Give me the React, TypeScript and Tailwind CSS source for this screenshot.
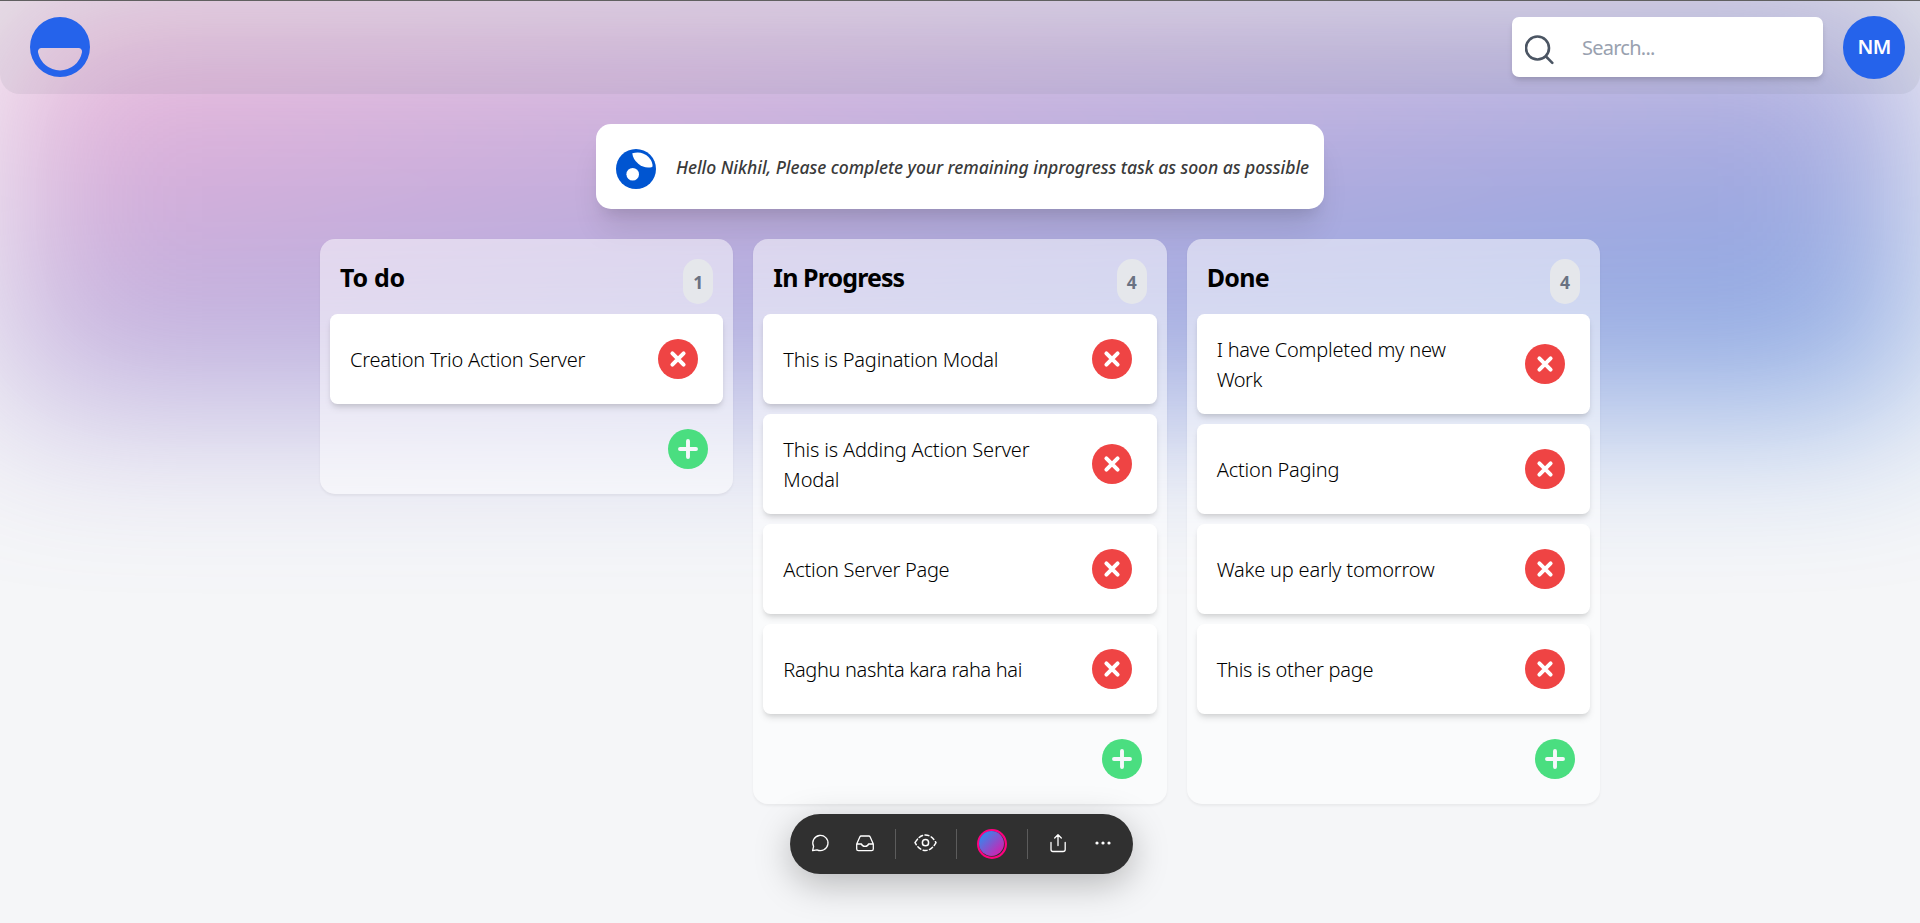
import React from "react";

type Line = { text: string; tracking: string };
type Col = { id: string; title: string; titleClass: string; tasks: Line[][] };

const columns: Col[] = [
  {
    id: "todo",
    title: "To do",
    titleClass: "tracking-[-0.25px]",
    tasks: [[{ text: "Creation Trio Action Server", tracking: "tracking-[-0.23px]" }]],
  },
  {
    id: "inprogress",
    title: "In Progress",
    titleClass: "tracking-[-0.9px]",
    tasks: [
      [{ text: "This is Pagination Modal", tracking: "tracking-[-0.2px]" }],
      [
        { text: "This is Adding Action Server", tracking: "tracking-[-0.18px]" },
        { text: "Modal", tracking: "tracking-[-0.1px]" },
      ],
      [{ text: "Action Server Page", tracking: "tracking-[-0.27px]" }],
      [{ text: "Raghu nashta kara raha hai", tracking: "tracking-[-0.35px]" }],
    ],
  },
  {
    id: "done",
    title: "Done",
    titleClass: "tracking-[-0.7px]",
    tasks: [
      [
        { text: "I have Completed my new", tracking: "tracking-[-0.22px]" },
        { text: "Work", tracking: "tracking-[-0.5px]" },
      ],
      [{ text: "Action Paging", tracking: "tracking-[-0.19px]" }],
      [{ text: "Wake up early tomorrow", tracking: "tracking-[-0.2px]" }],
      [{ text: "This is other page", tracking: "tracking-[-0.27px]" }],
    ],
  },
];

function RemoveIcon() {
  return (
    <svg width="40" height="40" viewBox="0 0 40 40">
      <circle cx="20" cy="20" r="20" fill="#ef4444" />
      <path d="M14.4 14.4L25.6 25.6M25.6 14.4L14.4 25.6" stroke="#fff" strokeWidth="4" strokeLinecap="round" />
    </svg>
  );
}

function AddIcon() {
  return (
    <svg width="40" height="40" viewBox="0 0 40 40">
      <circle cx="20" cy="20" r="20" fill="#4ade80" />
      <path d="M20 12V28M12 20H28" stroke="#f6f7fb" strokeWidth="3.9" strokeLinecap="round" />
    </svg>
  );
}

function TaskCard({ lines }: { lines: Line[] }) {
  return (
    <div className="flex min-h-[90px] items-center justify-between rounded-[7.5px] bg-white py-5 pl-5 pr-[25px] shadow-[0_5px_7.5px_-1px_rgba(0,0,0,0.1),0_2.5px_5px_-2px_rgba(0,0,0,0.1)]">
      <p className="translate-y-px text-[20px] font-light leading-[30px] text-black">
        {lines.map((line) => (
          <span key={line.text} className={`block whitespace-nowrap ${line.tracking}`}>
            {line.text}
          </span>
        ))}
      </p>
      <button className="shrink-0">
        <RemoveIcon />
      </button>
    </div>
  );
}

function Column({ col }: { col: Col }) {
  return (
    <section className="rounded-[15px] bg-white/50 p-[10px] shadow-[0_1.25px_2.5px_0_rgba(0,0,0,0.05)]">
      <h2 className="flex h-[65px] items-start justify-between px-[10px] pt-[10px] text-[25px] font-bold leading-[37px] text-black">
        <span className={col.titleClass}>{col.title}</span>
        <span className="flex h-[45px] w-[30px] items-center justify-center rounded-full bg-gray-200 text-[17.5px] leading-[25px] text-gray-500">
          <span className="pt-[2px]">{col.tasks.length}</span>
        </span>
      </h2>
      <div className="flex flex-col gap-[10px]">
        {col.tasks.map((lines) => (
          <TaskCard key={lines[0].text} lines={lines} />
        ))}
      </div>
      <div className="flex h-20 items-end justify-end pb-[15px] pr-[15px]">
        <button>
          <AddIcon />
        </button>
      </div>
    </section>
  );
}

function Toolbar() {
  const stroke = { fill: "none", stroke: "#fff", strokeWidth: 1.3, strokeLinecap: "round", strokeLinejoin: "round" } as const;
  return (
    <div className="fixed left-[790px] top-[814px] flex h-[60px] w-[343px] items-center rounded-full bg-[#303030] shadow-[0_10px_36px_rgba(0,0,0,0.26)]">
      <svg width="343" height="60" viewBox="0 0 343 60">
        <path {...stroke} d="M22.600 36.700 L23.600 32.400 A7.600 7.600 0 1 1 27 35.800 Z" />
        <path {...stroke} d="M66.700 30 L69.800 22.900 Q70.200 22 71.200 22 H78.800 Q79.800 22 80.200 22.900 L83.300 30 V35 Q83.300 36.700 81.600 36.700 H68.400 Q66.700 36.700 66.700 35 V30 H71.500 Q72 32.300 75 32.300 Q78 32.300 78.500 30 H83" />
        <path stroke="#5c5c5c" d="M105.500 15V45M166.500 15V45M237.500 15V45" />
        <circle {...stroke} cx="135.500" cy="28.700" r="3.100" strokeWidth="1.500" />
        <path {...stroke} strokeWidth="1.500" strokeDasharray="4 2.500" d="M125 28.700 Q129.500 21 135.500 21 Q141.500 21 146 28.700 Q141.500 36.500 135.500 36.500 Q129.500 36.500 125 28.700" />
        <path {...stroke} d="M261 28.500 V35.500 Q261 37.500 263 37.500 H273 Q275.200 37.500 275.200 35.500 V28.500 M268 31.500 V21 M264.700 24 L268 20.700 L271.300 24" />
        <circle cx="307" cy="29" r="1.600" fill="#fff" />
        <circle cx="313" cy="29" r="1.600" fill="#fff" />
        <circle cx="319" cy="29" r="1.600" fill="#fff" />
        <defs>
          <linearGradient id="orb" x1="0" y1="0" x2="1" y2="1">
            <stop offset="0.1" stopColor="#2d8cf0" />
            <stop offset="0.9" stopColor="#d81cae" />
          </linearGradient>
        </defs>
        <circle cx="202" cy="30" r="13.900" fill="#303030" stroke="#ff0080" strokeWidth="2.200" />
        <circle cx="201.500" cy="29.500" r="12.500" fill="url(#orb)" />
      </svg>
    </div>
  );
}

export default function App() {
  return (
    <div className="relative isolate h-[923px] w-full overflow-hidden bg-[#f5f6f8] font-['Noto_Sans','Open_Sans',sans-serif]">
      <div className="absolute left-0 top-0 -z-10 h-[408px] w-full rounded-[7.5px] bg-linear-to-br/srgb from-[#f472b6] to-[#0055d1] opacity-50 blur-[84px]" />
      <header className="flex h-[94px] items-center justify-between rounded-b-[20px] border-t border-[#606060] bg-gray-500/10 pb-[2px] pl-[30px] pr-[15px]">
        <svg width="60" height="60" viewBox="0 0 60 60">
          <path
            fill="#2563eb"
            fillRule="evenodd"
            d="M30 0a30 30 0 1 1 0 60a30 30 0 1 1 0-60ZM11.500 31a3.500 3.500 0 0 0-3.500 4.200a22.400 22.400 0 0 0 44 0a3.500 3.500 0 0 0-3.500-4.200Z"
          />
        </svg>
        <div className="flex items-center gap-5">
          <label className="flex h-[60px] w-[311px] items-center rounded-[7px] bg-white pl-[13px] shadow-[0_5px_7.500px_-1px_rgba(0,0,0,0.1),0_2.500px_5px_-2px_rgba(0,0,0,0.1)]">
            <svg width="29" height="30" viewBox="0 0 29 30" className="mt-[6px] shrink-0" fill="none" stroke="#4b5563" strokeWidth="2.600" strokeLinecap="round">
              <circle cx="12.500" cy="13" r="11.500" />
              <path d="M21 21.500L27.300 27.800" />
            </svg>
            <input className="ml-[28px] w-[200px] pt-[2px] text-[20px] tracking-[-0.75px] outline-none placeholder:text-gray-400" placeholder="Search..." />
          </label>
          <div className="mt-px flex h-[63px] w-[62px] items-center justify-center rounded-full bg-[#2563eb] text-[20px] font-semibold tracking-[-0.7px] text-white">NM</div>
        </div>
      </header>
      <div className="flex justify-center pt-[30px]">
        <p className="flex h-[85px] w-[728px] items-center gap-5 rounded-[15px] bg-white pl-5 text-[17.500px] font-medium italic text-[#3a3a3a] shadow-[0_25px_31px_-6px_rgba(0,0,0,0.1),0_10px_12.500px_-7.500px_rgba(0,0,0,0.1)]">
          <svg width="40" height="40" viewBox="0 0 40 40" className="mt-[5px] shrink-0">
            <circle cx="20" cy="20" r="20" fill="#0055d1" />
            <circle cx="16.700" cy="25.300" r="6.300" fill="#fff" />
            <path fill="#fff" d="M16.300 4.200Q26 1.500 32.500 8Q37.500 13.500 36.300 18Q28.500 20 22.300 14.800Q16.800 10 16.300 4.200Z" />
          </svg>
          <span className="whitespace-nowrap pt-[2px] tracking-[-0.045px]">Hello Nikhil, Please complete your remaining inprogress task as soon as possible</span>
        </p>
      </div>
      <main className="mx-auto mt-[30px] grid w-[1280px] grid-cols-3 items-start gap-5">
        {columns.map((c) => (
          <Column key={c.id} col={c} />
        ))}
      </main>
      <Toolbar />
    </div>
  );
}
